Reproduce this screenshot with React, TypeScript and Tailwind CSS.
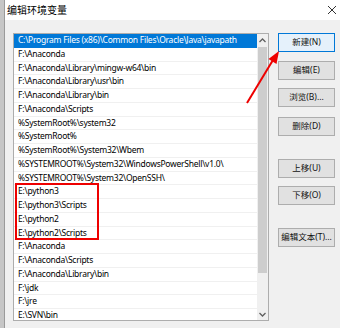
import React from 'react';

const paths = [
  'C:\\Program Files (x86)\\Common Files\\Oracle\\Java\\javapath',
  'F:\\Anaconda',
  'F:\\Anaconda\\Library\\mingw-w64\\bin',
  'F:\\Anaconda\\Library\\usr\\bin',
  'F:\\Anaconda\\Library\\bin',
  'F:\\Anaconda\\Scripts',
  '%SystemRoot%\\system32',
  '%SystemRoot%',
  '%SystemRoot%\\System32\\Wbem',
  '%SYSTEMROOT%\\System32\\WindowsPowerShell\\v1.0\\',
  '%SYSTEMROOT%\\System32\\OpenSSH\\',
  'E:\\python3',
  'E:\\python3\\Scripts',
  'E:\\python2',
  'E:\\python2\\Scripts',
  'F:\\Anaconda',
  'F:\\Anaconda\\Scripts',
  'F:\\Anaconda\\Library\\bin',
  'F:\\jdk',
  'F:\\jre',
  'E:\\SVN\\bin',
];

const font = { fontFamily: '"Noto Sans", "Noto Sans CJK SC", sans-serif' };

function Btn({ label, primary, className }: { label: string; primary?: boolean; className?: string }) {
  return (
    <button
      className={`h-[19px] w-[57px] text-[8.5px] leading-none text-[#111] whitespace-nowrap border ${
        primary ? 'border-[#0078d7] bg-[#e5f1fb]' : 'border-[#adadad] bg-[#e1e1e1]'
      } ${className || ''}`}
    >
      {label}
    </button>
  );
}

export default function App() {
  return (
    <div className="relative w-[340px] h-[328px] flex overflow-hidden" style={font}>
      {/* window behind */}
      <div className="w-[5px] bg-[#c6c6c6] border-r border-[#9a9a9a]" />

      <div className="flex-1 flex flex-col bg-[#f0f0f0]">
        {/* Title bar */}
        <div className="h-[20px] bg-white flex items-center justify-between pl-[2px] pr-[3px]">
          <span className="text-[10px] text-black">编辑环境变量</span>
          <svg width="10" height="10" viewBox="0 0 10 10">
            <path d="M1 1 L9 9 M9 1 L1 9" stroke="#333" strokeWidth="1" />
          </svg>
        </div>

        {/* Body */}
        <div className="flex pl-[8px] pt-[13px] gap-[9px]">
          {/* List box */}
          <div className="relative w-[256px] h-[288px] shrink-0 border border-[#adadad] bg-white flex overflow-hidden">
            <div className="flex-1 min-w-0 overflow-hidden flex flex-col">
              {paths.map((p, i) => (
                <div
                  key={i}
                  className={`h-[13.75px] shrink-0 flex items-center pl-[4px] text-[8.5px] tracking-[-0.25px] whitespace-nowrap border-b ${
                    i === 0 ? 'bg-[#0078d7] text-white border-[#0078d7]' : 'text-black border-[#f0f0f0]'
                  }`}
                >
                  {p}
                </div>
              ))}
            </div>

            {/* Scrollbar */}
            <div className="w-[11px] shrink-0 bg-[#f0f0f0] flex flex-col">
              <div className="h-[13px] flex items-center justify-center">
                <svg width="7" height="5" viewBox="0 0 7 5">
                  <path d="M0.5 4 L3.5 1 L6.5 4" stroke="#606060" strokeWidth="1.3" fill="none" />
                </svg>
              </div>
              <div className="h-[226px] mx-[1px] bg-[#cdcdcd]" />
              <div className="flex-1 flex items-end justify-center pb-[3px]">
                <svg width="7" height="5" viewBox="0 0 7 5">
                  <path d="M0.5 1 L3.5 4 L6.5 1" stroke="#606060" strokeWidth="1.3" fill="none" />
                </svg>
              </div>
            </div>

            {/* Red highlight box */}
            <div className="absolute left-[1px] top-[149px] w-[84px] h-[57px] border-2 border-[#ee0000]" />
          </div>

          {/* Buttons */}
          <div className="flex flex-col">
            <Btn label="新建(N)" primary />
            <Btn label="编辑(E)" className="mt-[9px]" />
            <Btn label="浏览(B)..." className="mt-[8px]" />
            <Btn label="删除(D)" className="mt-[10px]" />
            <Btn label="上移(U)" className="mt-[23px]" />
            <Btn label="下移(O)" className="mt-[8px]" />
            <Btn label="编辑文本(T)..." className="mt-[23px]" />
          </div>
        </div>
      </div>

      {/* Red arrow */}
      <svg className="absolute left-0 top-0 pointer-events-none" width="340" height="328">
        <line x1="247" y1="103" x2="273" y2="60" stroke="#ee0000" strokeWidth="2" />
        <polygon points="279,51 276.5,64 268.5,59" fill="#ee0000" />
      </svg>
    </div>
  );
}
